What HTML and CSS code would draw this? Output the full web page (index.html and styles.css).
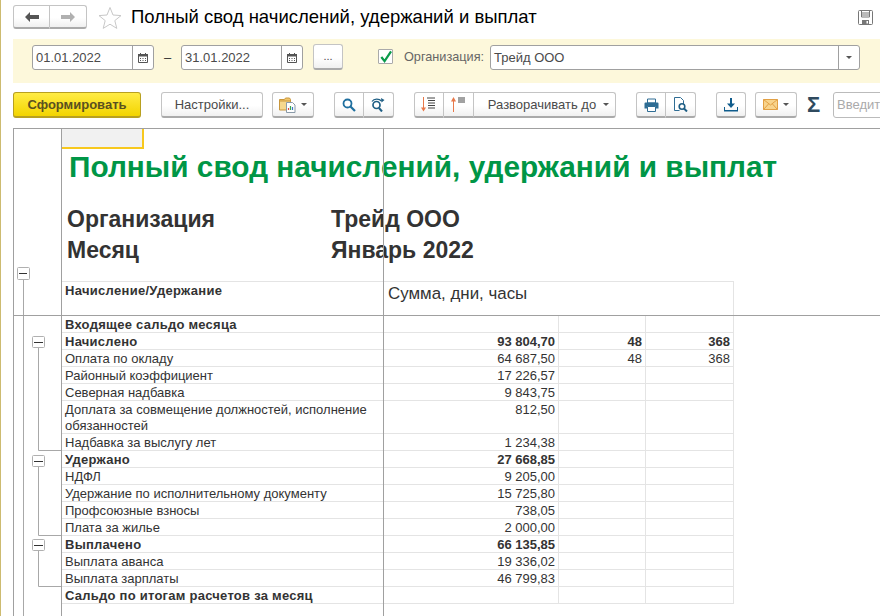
FILE: index.html
```html
<!DOCTYPE html>
<html lang="ru">
<head>
<meta charset="utf-8">
<title>Полный свод начислений, удержаний и выплат</title>
<link rel="stylesheet" href="styles.css">
</head>
<body>
<div class="app">
  <header class="titlebar">
    <div class="btn-group nav-group">
      <button class="btn seg nav"><svg width="14" height="10" viewBox="0 0 14 10"><path d="M0 5 5 0v3h9v4H5v3z" fill="#555"/></svg></button>
      <button class="btn seg nav"><svg width="14" height="10" viewBox="0 0 14 10"><path d="M14 5 9 0v3H0v4h9v3z" fill="#b0b0b0"/></svg></button>
    </div>
    <svg class="star" width="24" height="23" viewBox="0 0 24 23"><path d="M12 1.500l3 7.500 8 .6-6.200 5 2 7.800L12 18.200 5.200 22.400l2-7.800L1 9.600l8-.6z" fill="#fff" stroke="#c8c8c8"/></svg>
    <h1 class="page-title">Полный свод начислений, удержаний и выплат</h1>
    <svg class="save" width="15" height="15" viewBox="0 0 15 15"><path d="M1.500.5h12a1 1 0 0 1 1 1v12a1 1 0 0 1-1 1h-12a1 1 0 0 1-1-1v-12a1 1 0 0 1 1-1z" fill="#fff" stroke="#777"/><path d="M3.500 1v6h8V1M3.500 3h8M3.500 5h8" fill="none" stroke="#777"/><path d="M4 10h7v4.500H4z" fill="#777"/><path d="M8.500 11h1.500v2.500H8.500z" fill="#fff"/></svg>
  </header>

  <section class="filters">
    <div class="field date">
      <span class="field-text">01.01.2022</span>
      <span class="field-btn"><svg width="10" height="10" viewBox="0 0 10 10"><use href="#cal"/></svg></span>
    </div>
    <span class="dash">–</span>
    <div class="field date">
      <span class="field-text">31.01.2022</span>
      <span class="field-btn"><svg width="10" height="10" viewBox="0 0 10 10"><use href="#cal"/></svg></span>
    </div>
    <button class="btn more">...</button>
    <span class="check"><svg width="14" height="14" viewBox="0 0 14 14"><path d="M2.500 7 6 11.500 13 1" fill="none" stroke="#0a9b4a" stroke-width="2.400"/></svg></span>
    <span class="org-label">Организация:</span>
    <div class="field org">
      <span class="field-text">Трейд ООО</span>
      <span class="field-btn"><i class="caret"></i></span>
    </div>
  </section>

  <nav class="toolbar">
    <button class="btn primary">Сформировать</button>
    <button class="btn settings">Настройки...</button>
    <button class="btn menu variants">
      <svg width="17" height="17" viewBox="0 0 17 17"><path d="M.5 3.500h5l1-1.500h4l1 1.500v3H.5z" fill="#f2c66a" stroke="#c8963c"/><path d="M.5 5h11v9H.5z" fill="#f6d88e" stroke="#c8963c"/><path d="M7.500 6.500h6l2.500 2.500v7.500H7.500z" fill="#fff" stroke="#8a9aa8"/><path d="M9.500 14v-2" stroke="#e0483c" stroke-width="1.200"/><path d="M11.500 14v-4" stroke="#3aa655" stroke-width="1.200"/><path d="M13.500 14v-3" stroke="#3c78c8" stroke-width="1.200"/></svg>
      <i class="caret"></i>
    </button>
    <div class="btn-group search-group">
      <button class="btn seg"><svg width="14" height="14" viewBox="0 0 14 14"><circle cx="5.500" cy="5.500" r="4" fill="none" stroke="#1f6f9f" stroke-width="1.800"/><path d="M8.500 8.500 13 13" stroke="#1f6f9f" stroke-width="2.200"/></svg></button>
      <button class="btn seg"><svg width="15" height="14" viewBox="0 0 15 14"><circle cx="5.500" cy="7" r="3.500" fill="none" stroke="#1f5f85" stroke-width="1.700"/><path d="M8 10 11 13.500" stroke="#1f5f85" stroke-width="2"/><path d="M1 3.500C3 .5 8 .5 10.500 3" fill="none" stroke="#1f5f85" stroke-width="1.300"/><path d="M10 0l3.500 2-3 2.500z" fill="#1f5f85"/></svg></button>
    </div>
    <div class="btn-group sort-group">
      <button class="btn seg sort"><svg width="16" height="15" viewBox="0 0 16 15"><path d="M2.500 0v12" stroke="#e8794a"/><path d="M0 10.500h5l-2.500 4z" fill="#e8794a"/><path d="M6 1h8M7 3.500h7M7 6h7M7 8.500h7M7 11h7" stroke="#444"/></svg></button>
      <button class="btn seg sort"><svg width="16" height="15" viewBox="0 0 16 15"><path d="M2.500 3v12" stroke="#e8794a"/><path d="M0 4.500h5L2.500 0z" fill="#e8794a"/><path d="M7 1h7M7 3h7M7 5h7" stroke="#444"/></svg></button>
      <button class="btn seg expand">Разворачивать до <i class="caret"></i></button>
    </div>
    <div class="btn-group print-group">
      <button class="btn seg"><svg width="15" height="14" viewBox="0 0 15 14"><path d="M3.500 1h8v4h-8z" fill="#fff" stroke="#2f6d94"/><path d="M1.500 4.500h12a1 1 0 0 1 1 1v5h-3v-2h-8v2h-3v-5a1 1 0 0 1 1-1z" fill="#2f6d94"/><path d="M3.500 8.500h8v5h-8z" fill="#fff" stroke="#2f6d94"/></svg></button>
      <button class="btn seg"><svg width="14" height="15" viewBox="0 0 14 15"><path d="M.5.500h6l3 3v4M.5.500v13h5" fill="#fff" stroke="#2f6d94"/><circle cx="8" cy="9.500" r="2.800" fill="#fff" stroke="#1f5f85" stroke-width="1.600"/><path d="M10 11.500l3 3" stroke="#1f5f85" stroke-width="2"/></svg></button>
    </div>
    <button class="btn download"><svg width="14" height="14" viewBox="0 0 14 14"><path d="M7 0v6" stroke="#0f5c8c" stroke-width="2"/><path d="M3 5.500h8L7 10z" fill="#0f5c8c"/><path d="M.5 9v3.500h13V9" fill="none" stroke="#0f5c8c"/><path d="M0 12h14v1.500H0z" fill="#0f5c8c"/></svg></button>
    <button class="btn menu mail">
      <svg width="15" height="11" viewBox="0 0 15 11"><path d="M.5.500h14v10H.5z" fill="#f8d48c" stroke="#e2a044"/><path d="M.5.500 7.500 6l7-5.500M.5 10.500l5-5.500M14.500 10.500l-5-5.500" fill="none" stroke="#e2a044"/></svg>
      <i class="caret"></i>
    </button>
    <span class="sigma">Σ</span>
    <div class="search-box">Введите</div>
  </nav>

  <main class="report">
    <aside class="gutter">
      <svg class="outline" width="47" height="487" viewBox="14 129 47 487">
        <g fill="none" stroke="#a8a8a8">
          <path d="M23.500 279V616"/>
          <path d="M38.500 348V450.500H61"/>
          <path d="M38.500 466V535.500H61"/>
          <path d="M38.500 551V586.500H61"/>
        </g>
        <g fill="#fff" stroke="#b0b0b0">
          <rect x="17.500" y="267.500" width="12" height="12" rx="1"/>
          <rect x="32.500" y="336.500" width="12" height="11" rx="1"/>
          <rect x="32.500" y="455.500" width="12" height="11" rx="1"/>
          <rect x="32.500" y="539.500" width="12" height="11" rx="1"/>
        </g>
        <g stroke="#333">
          <path d="M19 273.500h8M34 342.500h9M34 461.500h9M34 545.500h9"/>
        </g>
      </svg>
    </aside>
    <div class="sheet">
      <div class="sheet-head">
        <div class="cell-selected"></div>
        <h2 class="report-title">Полный свод начислений, удержаний и выплат</h2>
        <dl class="report-meta">
          <dt>Организация</dt><dd>Трейд ООО</dd>
          <dt>Месяц</dt><dd>Январь 2022</dd>
        </dl>
      </div>
      <table class="grid">
        <colgroup><col class="c1"><col class="c2"><col class="c3"><col class="c4"></colgroup>
        <thead>
          <tr><th class="h-name">Начисление/Удержание</th><th class="h-sum" colspan="3">Сумма, дни, часы</th></tr>
        </thead>
        <tbody>
          <tr class="b"><td>Входящее сальдо месяца</td><td></td><td></td><td></td></tr>
          <tr class="b"><td>Начислено</td><td>93 804,70</td><td>48</td><td>368</td></tr>
          <tr><td>Оплата по окладу</td><td>64 687,50</td><td>48</td><td>368</td></tr>
          <tr><td>Районный коэффициент</td><td>17 226,57</td><td></td><td></td></tr>
          <tr><td>Северная надбавка</td><td>9 843,75</td><td></td><td></td></tr>
          <tr><td>Доплата за совмещение должностей, исполнение обязанностей</td><td>812,50</td><td></td><td></td></tr>
          <tr><td>Надбавка за выслугу лет</td><td>1 234,38</td><td></td><td></td></tr>
          <tr class="b"><td>Удержано</td><td>27 668,85</td><td></td><td></td></tr>
          <tr><td>НДФЛ</td><td>9 205,00</td><td></td><td></td></tr>
          <tr><td>Удержание по исполнительному документу</td><td>15 725,80</td><td></td><td></td></tr>
          <tr><td>Профсоюзные взносы</td><td>738,05</td><td></td><td></td></tr>
          <tr><td>Плата за жилье</td><td>2 000,00</td><td></td><td></td></tr>
          <tr class="b"><td>Выплачено</td><td>66 135,85</td><td></td><td></td></tr>
          <tr><td>Выплата аванса</td><td>19 336,02</td><td></td><td></td></tr>
          <tr><td>Выплата зарплаты</td><td>46 799,83</td><td></td><td></td></tr>
          <tr class="b"><td>Сальдо по итогам расчетов за месяц</td><td></td><td></td><td></td></tr>
        </tbody>
      </table>
    </div>
    <div class="freeze-v"></div>
    <div class="freeze-h"></div>
  </main>
</div>

<svg class="defs" width="0" height="0">
  <symbol id="cal" viewBox="0 0 10 10">
    <path d="M.5 1.500h9v8h-9z" fill="#fff" stroke="#555"/>
    <path d="M0 1h10v2.500H0z" fill="#555"/>
    <path d="M2 0h1v2H2zM7 0h1v2H7z" fill="#555"/>
    <path d="M2 5h1v1H2zM4.500 5h1v1h-1zM7 5h1v1H7zM2 7h1v1H2zM4.500 7h1v1h-1zM7 7h1v1H7z" fill="#555"/>
  </symbol>
</svg>
</body>
</html>
```
FILE: styles.css
```css
* { box-sizing: border-box; }
html, body { margin: 0; padding: 0; }
body {
  width: 880px;
  height: 616px;
  overflow: hidden;
  background: #fff;
  font-family: "Liberation Sans", Arial, sans-serif;
  font-size: 13px;
  color: #333;
}
.defs { position: absolute; }
.app {
  width: 880px;
  height: 616px;
  display: flex;
  flex-direction: column;
  border-left: 1px solid #cdbb70;
  padding-left: 12px;
  overflow: hidden;
}

/* Buttons */
.btn {
  display: inline-flex;
  align-items: center;
  justify-content: center;
  height: 26px;
  margin: 0;
  padding: 0;
  font: inherit;
  color: #4a4a4a;
  background: linear-gradient(#fff, #fff 55%, #f0f0f0);
  border: 1px solid #c4c4c4;
  border-bottom: 2px solid #aaa;
  border-radius: 3px;
  flex: none;
}
.btn-group { display: flex; flex: none; }
.btn.seg { border-radius: 0; border-left-width: 0; }
.btn.seg:first-child { border-left-width: 1px; border-radius: 3px 0 0 3px; }
.btn.seg:last-child { border-radius: 0 3px 3px 0; }
.caret {
  display: inline-block;
  width: 0;
  height: 0;
  border-left: 3px solid transparent;
  border-right: 3px solid transparent;
  border-top: 3px solid #555;
}

/* Title bar */
.titlebar {
  display: flex;
  align-items: center;
  height: 24px;
  margin-top: 5px;
  flex: none;
}
.nav-group { width: 74px; }
.nav-group .btn { height: 24px; }
.nav { width: 37px; }
.star { margin-left: 11px; flex: none; }
.page-title {
  margin: 0 0 0 9px;
  font-size: 18.5px;
  font-weight: 400;
  color: #000;
  white-space: nowrap;
}
.save { margin-left: auto; margin-right: 7px; }

/* Filter band */
.filters {
  display: flex;
  align-items: flex-start;
  height: 44px;
  margin-top: 10px;
  padding: 6px 0 0 19px;
  background: #fdf8db;
  flex: none;
}
.field {
  display: flex;
  height: 25px;
  background: #fff;
  border: 1px solid #a0a0a0;
  border-radius: 3px;
  color: #4a4a4a;
  flex: none;
}
.field-text { flex: 1; padding-left: 3px; line-height: 23px; }
.field-btn {
  display: flex;
  align-items: center;
  justify-content: center;
  width: 21px;
  border-left: 1px solid #a0a0a0;
}
.date { width: 122px; }
.dash { width: 27px; line-height: 25px; text-align: center; color: #333; }
.more { width: 30px; margin: -1px 0 0 10px; padding-bottom: 2px; font-size: 11px; }
.check {
  width: 15px;
  height: 15px;
  margin: 4px 0 0 35px;
  background: #fff;
  border: 1px solid #aaa;
  border-radius: 1px;
  display: flex;
  flex: none;
}
.org-label { margin-left: 11px; color: #666; width: 86px; flex: none; font-size: 12.7px; line-height: 24px; }
.org { width: 370px; }

/* Toolbar */
.toolbar {
  display: flex;
  align-items: center;
  height: 26px;
  margin-top: 9px;
  flex: none;
}
.primary {
  width: 128px;
  font-weight: 700;
  color: #5a5020;
  background: linear-gradient(#ffec45, #f3d400);
  border: 1px solid #b8a020;
  border-bottom-width: 2px;
}
.settings { width: 102px; margin-left: 20px; }
.menu { gap: 5px; }
.variants { width: 42px; margin-left: 9px; }
.search-group { margin-left: 20px; }
.search-group .btn { width: 30px; }
.sort-group { margin-left: 20px; }
.sort { width: 30px; }
.expand { width: 142px; gap: 7px; padding-left: 8px; }
.print-group { margin-left: 20px; }
.print-group .btn { width: 30px; }
.download { width: 30px; margin-left: 20px; }
.mail { width: 42px; margin-left: 9px; }
.sigma {
  margin-left: 10px;
  font-size: 22px;
  line-height: 26px;
  font-weight: 700;
  color: #2f4a5e;
  flex: none;
  width: 15px;
}
.search-box {
  margin-left: 11px;
  width: 70px;
  height: 26px;
  line-height: 24px;
  padding-left: 3px;
  color: #aaa;
  border: 1px solid #bbb;
  border-radius: 3px 0 0 3px;
  flex: none;
}

/* Report */
.report {
  position: relative;
  display: flex;
  flex: 1;
  margin-top: 10px;
  min-height: 0;
  border-top: 1px solid #a0a0a0;
  border-left: 1px solid #a0a0a0;
}
.gutter { width: 47px; flex: none; position: relative; }
.outline { position: absolute; left: 0; top: 0; display: block; }
.sheet {
  border-left: 1px solid #a0a0a0;
  flex: 1;
  min-width: 0;
}
.sheet-head { height: 152px; position: relative; }
.cell-selected {
  width: 82px;
  height: 20px;
  background: #f1f1f1;
  border-right: 2px solid #f7c81e;
  border-bottom: 2px solid #f7c81e;
}
.report-title {
  margin: 0;
  padding: 0 0 0 7px;
  font-size: 29.8px;
  line-height: 36px;
  font-weight: 700;
  color: #009646;
  white-space: nowrap;
}
.report-meta {
  display: grid;
  grid-template-columns: 264px auto;
  margin: 19px 0 0 5px;
  font-size: 23px;
  line-height: 31px;
  font-weight: 700;
  color: #333;
}
.report-meta dt, .report-meta dd { margin: 0; white-space: nowrap; }

.grid {
  table-layout: fixed;
  border-collapse: separate;
  border-spacing: 0;
  width: 672px;
}
.c1 { width: 322px; }
.c2 { width: 175px; }
.c3 { width: 87px; }
.c4 { width: 88px; }
.grid th {
  height: 35px;
  vertical-align: top;
  text-align: left;
  border-top: 1px solid #e4e4e4;
  padding: 0 3px;
  font-size: 13px;
}
.h-name { font-weight: 700; line-height: 18px; letter-spacing: .3px; }
.grid th.h-sum {
  font-size: 16.9px;
  font-weight: 400;
  line-height: 24px;
  padding-left: 4px;
  border-right: 1px solid #e4e4e4;
}
.grid td {
  padding: 0 3px;
  line-height: 16px;
  vertical-align: top;
  text-align: right;
  border-right: 1px solid #e4e4e4;
  border-bottom: 1px solid #e4e4e4;
}
.grid td::before { content: ""; display: block; height: 1px; }
.grid td::after { content: ""; display: block; margin-top: -1px; }
.grid td:first-child { text-align: left; border-right: 0; }
.grid .b td { font-weight: 700; }
.grid .b td:first-child { letter-spacing: .25px; }

.freeze-v {
  position: absolute;
  left: 369px;
  top: 0;
  bottom: 0;
  width: 1px;
  background: #a0a0a0;
}
.freeze-h {
  position: absolute;
  left: 0;
  right: 0;
  top: 186px;
  height: 1px;
  background: #a0a0a0;
}
```
